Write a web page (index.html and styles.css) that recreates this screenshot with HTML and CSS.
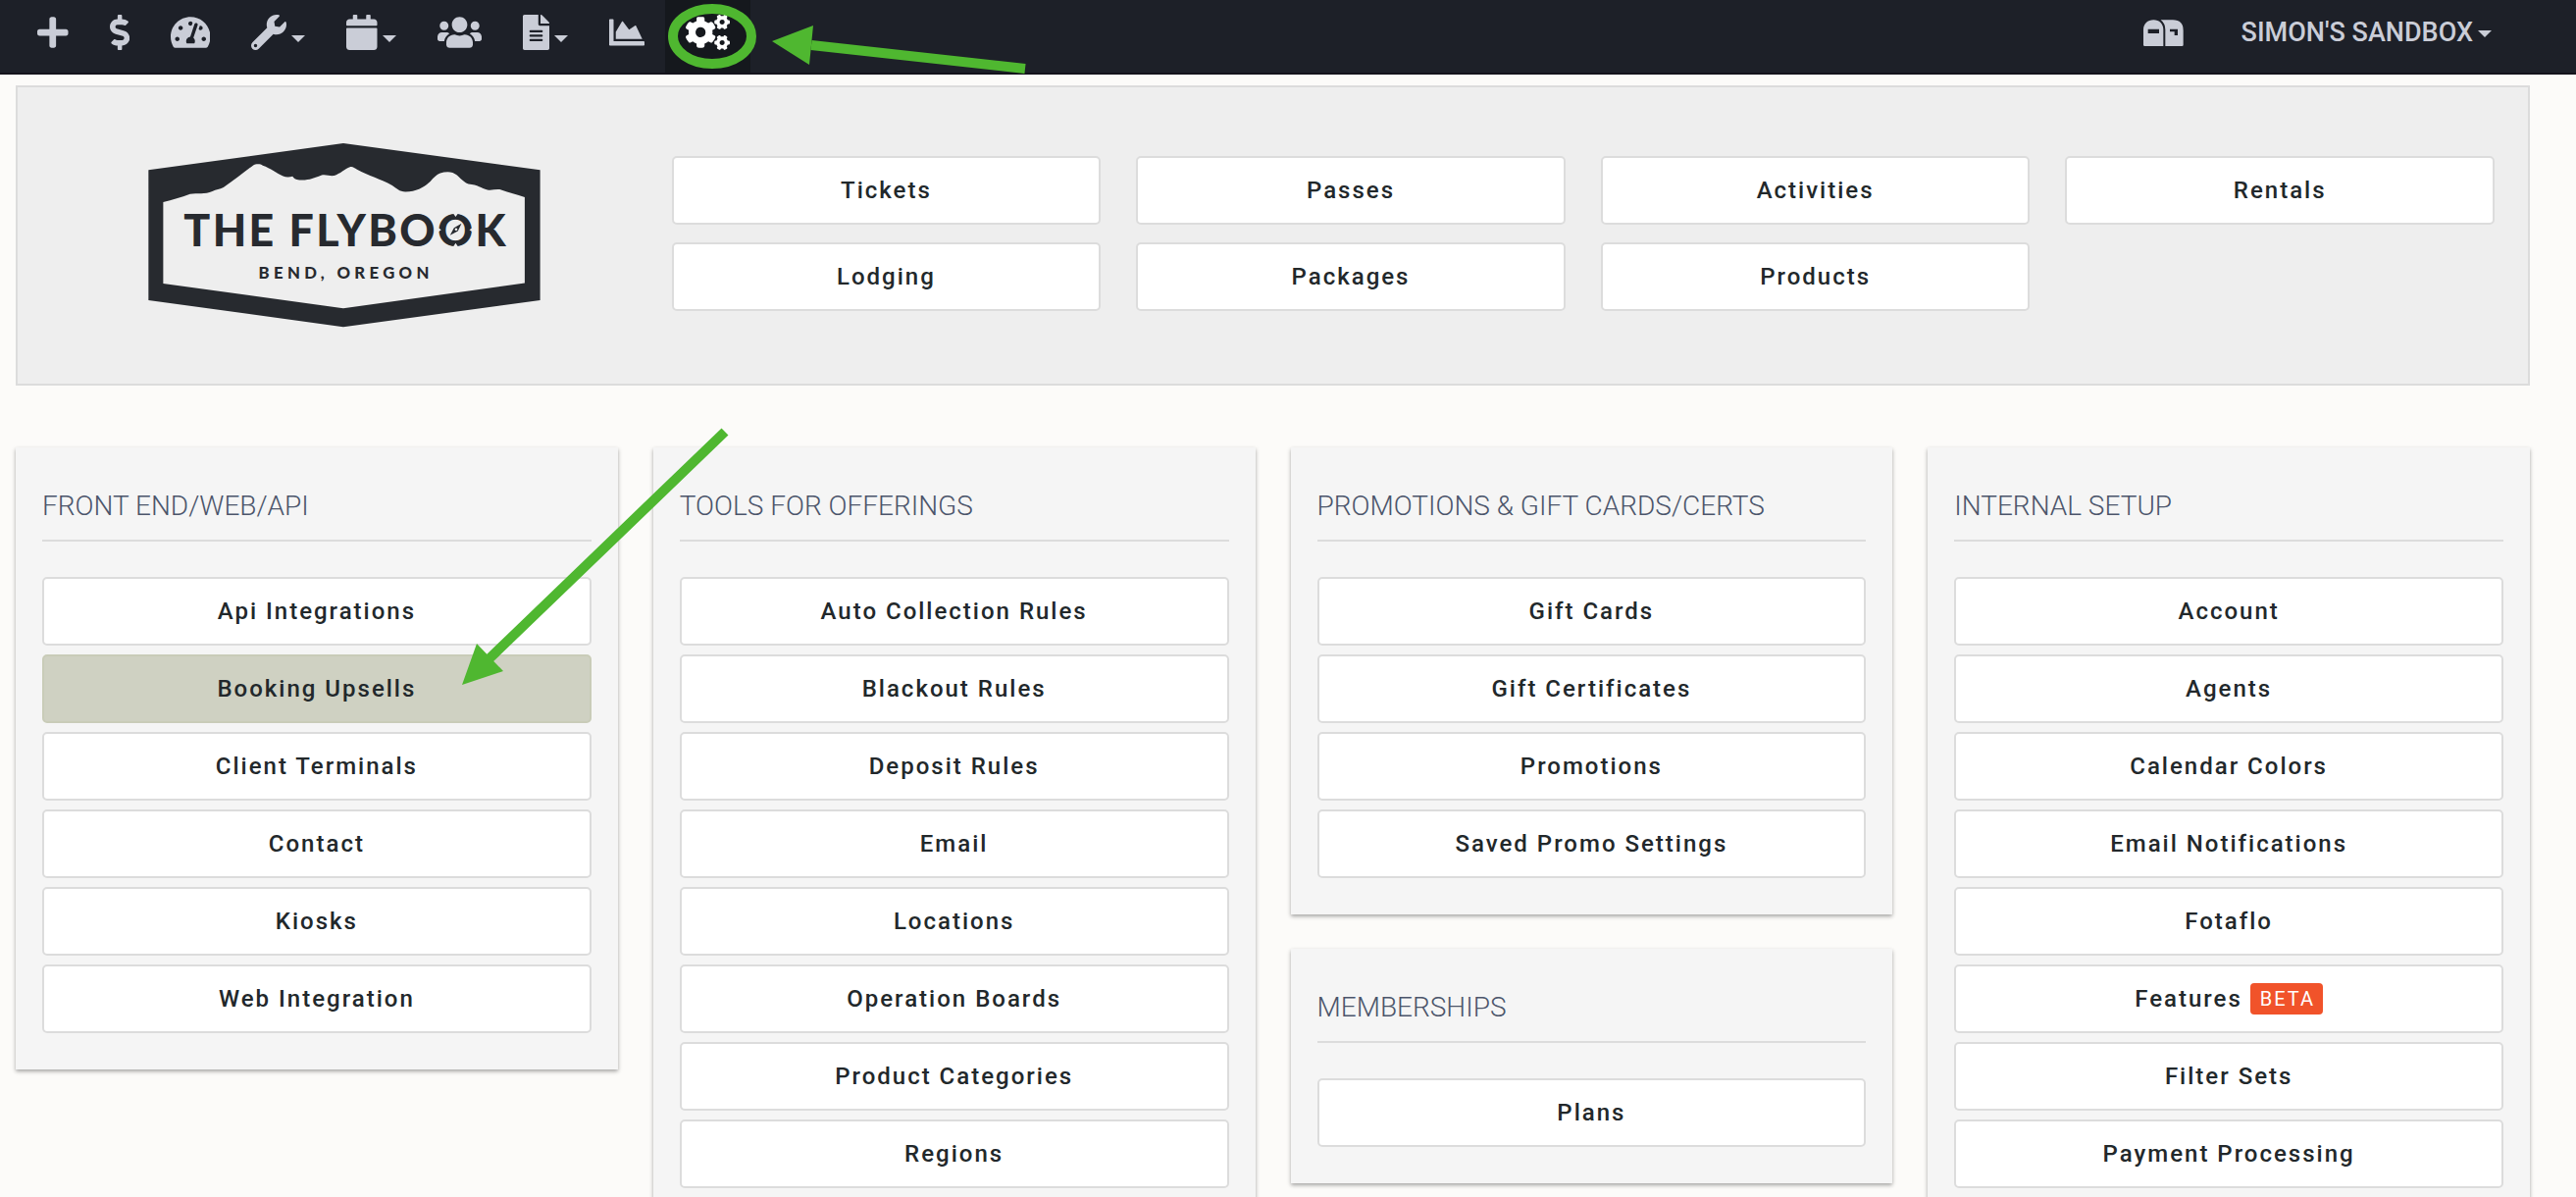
FILE: index.html
```html
<!DOCTYPE html>
<html lang="en">
<head>
    <meta charset="UTF-8">
    <meta name="viewport" content="width=device-width, initial-scale=1.0">
    <title>The Flybook - Configuration</title>
    <link rel="stylesheet" href="styles.css">
</head>
<body>
    <div class="page">
        <!-- Top navigation -->
        <nav class="navbar">
            <div class="nav-left">
                <a href="#" class="nav-item" aria-label="Add">
                    <svg class="icon" viewBox="0 0 448 512"><path d="M416 208H272V64c0-17.67-14.33-32-32-32h-32c-17.67 0-32 14.33-32 32v144H32c-17.67 0-32 14.33-32 32v32c0 17.67 14.33 32 32 32h144v144c0 17.67 14.33 32 32 32h32c17.67 0 32-14.33 32-32V304h144c17.67 0 32-14.33 32-32v-32c0-17.67-14.33-32-32-32z"/></svg>
                </a>
                <a href="#" class="nav-item" aria-label="Sales">
                    <svg class="icon" viewBox="0 0 288 512"><path d="M209.2 233.4l-108-31.6C88.7 198.2 80 186.5 80 173.5c0-16.3 13.2-29.5 29.5-29.5h66.3c12.2 0 24.2 3.7 34.2 10.5 6.1 4.1 14.3 3.1 19.5-2l34.8-34c7.1-6.9 6.1-18.4-1.8-24.5C238 74.8 207.4 64.1 176 64V16c0-8.8-7.2-16-16-16h-32c-8.8 0-16 7.2-16 16v48h-2.5C45.8 64-5.4 118.7.5 183.6c4.2 46.1 39.4 83.6 83.8 96.6l102.5 30c12.5 3.7 21.2 15.3 21.2 28.3 0 16.3-13.2 29.5-29.5 29.5h-66.3C100 368 88 364.3 78 357.5c-6.1-4.1-14.3-3.1-19.5 2l-34.8 34c-7.1 6.9-6.1 18.4 1.8 24.5 24.5 19.2 55.1 29.9 86.5 30v48c0 8.8 7.2 16 16 16h32c8.8 0 16-7.2 16-16v-48.2c46.6-.9 90.3-28.6 105.7-72.7 21.5-61.6-14.6-124.8-72.5-141.7z"/></svg>
                </a>
                <a href="#" class="nav-item" aria-label="Dashboard">
                    <svg class="icon" viewBox="0 0 576 512"><path d="M288 32C128.94 32 0 160.94 0 320c0 52.8 14.25 102.26 39.06 144.8 5.61 9.62 16.3 15.2 27.44 15.2h443c11.14 0 21.83-5.58 27.44-15.2C561.75 422.26 576 372.8 576 320c0-159.06-128.94-288-288-288zm0 64c14.71 0 26.58 10.13 30.32 23.65-1.11 2.26-2.64 4.23-3.45 6.67l-9.22 27.67c-5.13 3.49-10.97 6.01-17.64 6.01-17.67 0-32-14.33-32-32S270.33 96 288 96zM96 384c-17.67 0-32-14.33-32-32s14.33-32 32-32 32 14.33 32 32-14.33 32-32 32zm48-160c-17.67 0-32-14.33-32-32s14.33-32 32-32 32 14.33 32 32-14.33 32-32 32zm246.77-72.41l-61.33 184C343.13 347.33 352 364.54 352 384c0 11.72-3.38 22.55-8.88 32H232.88c-5.5-9.45-8.88-20.28-8.88-32 0-33.94 26.5-61.43 59.9-63.59l61.34-184.01c4.17-12.56 17.73-19.45 30.36-15.17 12.57 4.19 19.35 17.79 15.17 30.36zm14.66 57.2l15.52-46.55c3.47-1.29 7.13-2.23 11.05-2.23 17.67 0 32 14.33 32 32s-14.33 32-32 32c-11.38-.01-20.89-6.28-26.57-15.22zM480 384c-17.67 0-32-14.33-32-32s14.33-32 32-32 32 14.33 32 32-14.33 32-32 32z"/></svg>
                </a>
                <a href="#" class="nav-item" aria-label="Tools">
                    <svg class="icon" viewBox="0 0 512 512"><path d="M507.73 109.1c-2.24-9.03-13.54-12.09-20.12-5.51l-74.36 74.36-67.88-11.31-11.31-67.88 74.36-74.36c6.62-6.62 3.43-17.9-5.66-20.16-47.38-11.74-99.55.91-136.58 37.93-39.64 39.64-50.55 97.1-34.05 147.2L18.74 402.76c-24.99 24.99-24.99 65.51 0 90.5 24.99 24.99 65.51 24.99 90.5 0l213.21-213.21c50.12 16.71 107.47 5.68 147.37-34.22 37.07-37.07 49.7-89.32 37.91-136.73zM64 472c-13.25 0-24-10.75-24-24 0-13.26 10.75-24 24-24s24 10.74 24 24c0 13.25-10.75 24-24 24z"/></svg>
                    <span class="caret"></span>
                </a>
                <a href="#" class="nav-item" aria-label="Calendar">
                    <svg class="icon" viewBox="0 0 448 512"><path d="M12 192h424c6.6 0 12 5.4 12 12v260c0 26.5-21.5 48-48 48H48c-26.5 0-48-21.5-48-48V204c0-6.6 5.4-12 12-12zm436-44v-36c0-26.5-21.5-48-48-48h-48V12c0-6.6-5.4-12-12-12h-40c-6.6 0-12 5.4-12 12v52H160V12c0-6.6-5.4-12-12-12h-40c-6.6 0-12 5.4-12 12v52H48C21.5 64 0 85.5 0 112v36c0 6.6 5.4 12 12 12h424c6.6 0 12-5.4 12-12z"/></svg>
                    <span class="caret"></span>
                </a>
                <a href="#" class="nav-item" aria-label="Customers">
                    <svg class="icon" viewBox="0 0 640 512"><path d="M96 224c35.3 0 64-28.7 64-64s-28.7-64-64-64-64 28.7-64 64 28.7 64 64 64zm448 0c35.3 0 64-28.7 64-64s-28.7-64-64-64-64 28.7-64 64 28.7 64 64 64zm32 32h-64c-17.6 0-33.5 7.1-45.1 18.6 40.3 22.1 68.9 62 75.1 109.4h66c17.7 0 32-14.3 32-32v-32c0-35.3-28.7-64-64-64zm-256 0c61.9 0 112-50.1 112-112S381.9 32 320 32 208 82.1 208 144s50.1 112 112 112zm76.8 32h-8.3c-20.8 10-43.9 16-68.5 16s-47.6-6-68.5-16h-8.3C179.6 288 128 339.6 128 403.2V432c0 26.5 21.5 48 48 48h288c26.5 0 48-21.5 48-48v-28.8c0-63.6-51.6-115.2-115.2-115.2zm-223.7-13.4C161.5 263.1 145.6 256 128 256H64c-35.3 0-64 28.7-64 64v32c0 17.7 14.3 32 32 32h65.9c6.3-47.4 34.9-87.3 75.2-109.4z"/></svg>
                </a>
                <a href="#" class="nav-item" aria-label="Documents">
                    <svg class="icon" viewBox="0 0 384 512"><path d="M224 136V0H24C10.7 0 0 10.7 0 24v464c0 13.3 10.7 24 24 24h336c13.3 0 24-10.7 24-24V160H248c-13.2 0-24-10.8-24-24zm64 236c0 6.6-5.4 12-12 12H108c-6.6 0-12-5.4-12-12v-8c0-6.6 5.4-12 12-12h168c6.6 0 12 5.4 12 12v8zm0-64c0 6.6-5.4 12-12 12H108c-6.6 0-12-5.4-12-12v-8c0-6.6 5.4-12 12-12h168c6.6 0 12 5.4 12 12v8zm0-72v8c0 6.6-5.4 12-12 12H108c-6.6 0-12-5.4-12-12v-8c0-6.6 5.4-12 12-12h168c6.6 0 12 5.4 12 12zm96-114.1v6.1H256V0h6.1c6.4 0 12.5 2.5 17 7l97.9 98c4.5 4.5 7 10.6 7 16.9z"/></svg>
                    <span class="caret"></span>
                </a>
                <a href="#" class="nav-item" aria-label="Reports">
                    <svg class="icon" viewBox="0 0 512 512"><path d="M500 384c6.6 0 12 5.4 12 12v40c0 6.6-5.4 12-12 12H12c-6.6 0-12-5.4-12-12V76c0-6.6 5.4-12 12-12h40c6.6 0 12 5.4 12 12v308h436zM372.7 159.5L288 216l-85.3-113.7c-5.1-6.8-15.5-6.3-19.9 1L96 248v104h384l-89.9-187.8c-3.2-6.5-11.4-8.7-17.4-4.7z"/></svg>
                </a>
                <a href="#" class="nav-item active" aria-label="Configuration">
                    <svg class="icon" viewBox="0 0 640 512"><path d="M512.1 191l-8.2 14.3c-3 5.3-9.4 7.5-15.1 5.4-11.8-4.4-22.6-10.7-32.1-18.6-4.6-3.8-5.8-10.5-2.8-15.7l8.2-14.3c-6.9-8-12.3-17.3-15.9-27.4h-16.5c-6 0-11.2-4.3-12.2-10.3-2-12-2.1-24.6 0-37.1 1-6 6.2-10.4 12.2-10.4h16.5c3.6-10.1 9-19.4 15.9-27.4l-8.2-14.3c-3-5.2-1.9-11.9 2.8-15.7 9.5-7.9 20.4-14.2 32.1-18.6 5.7-2.1 12.1.1 15.1 5.4l8.2 14.3c10.5-1.9 21.2-1.9 31.7 0L552 6.3c3-5.3 9.4-7.5 15.1-5.4 11.8 4.4 22.6 10.7 32.1 18.6 4.6 3.8 5.8 10.5 2.8 15.7l-8.2 14.3c6.9 8 12.3 17.3 15.9 27.4h16.5c6 0 11.2 4.3 12.2 10.3 2 12 2.1 24.6 0 37.1-1 6-6.2 10.4-12.2 10.4h-16.5c-3.6 10.1-9 19.4-15.9 27.4l8.2 14.3c3 5.2 1.9 11.9-2.8 15.7-9.5 7.9-20.4 14.2-32.1 18.6-5.7 2.1-12.1-.1-15.1-5.4l-8.2-14.3c-10.4 1.9-21.2 1.9-31.7 0zm-10.5-58.8c38.5 29.6 82.4-14.3 52.8-52.8-38.5-29.7-82.4 14.3-52.8 52.8zM386.3 286.1l33.7 16.8c10.1 5.8 14.5 18.1 10.5 29.1-8.9 24.2-26.4 46.4-42.6 65.8-7.4 8.9-20.2 11.1-30.3 5.3l-29.1-16.8c-16 13.7-34.6 24.6-54.9 31.7v33.6c0 11.6-8.3 21.6-19.7 23.6-24.6 4.2-50.4 4.4-75.9 0-11.5-2-20-11.9-20-23.6V418c-20.3-7.2-38.9-18-54.9-31.7L74 403c-10 5.8-22.9 3.6-30.3-5.3-16.2-19.4-33.3-41.6-42.2-65.7-4-10.9.4-23.2 10.5-29.1l33.3-16.8c-3.9-20.9-3.9-42.4 0-63.4L12 205.8c-10.1-5.8-14.6-18.1-10.5-29 8.9-24.2 26-46.4 42.2-65.8 7.4-8.9 20.2-11.1 30.3-5.3l29.1 16.8c16-13.7 34.6-24.6 54.9-31.7V57.1c0-11.5 8.2-21.5 19.6-23.5 24.6-4.2 50.5-4.4 76-.1 11.5 2 20 11.9 20 23.6v33.6c20.3 7.2 38.9 18 54.9 31.7l29.1-16.8c10-5.8 22.9-3.6 30.3 5.3 16.2 19.4 33.2 41.6 42.1 65.8 4 10.9.1 23.2-10 29.1l-33.7 16.8c3.9 21 3.9 42.5 0 63.5zm-117.6 21.1c59.2-77-28.7-164.9-105.7-105.7-59.2 77 28.7 164.9 105.7 105.7zm243.4 182.7l-8.2 14.3c-3 5.3-9.4 7.5-15.1 5.4-11.8-4.4-22.6-10.7-32.1-18.6-4.6-3.8-5.8-10.5-2.8-15.7l8.2-14.3c-6.9-8-12.3-17.3-15.9-27.4h-16.5c-6 0-11.2-4.3-12.2-10.3-2-12-2.1-24.6 0-37.1 1-6 6.2-10.4 12.2-10.4h16.5c3.6-10.1 9-19.4 15.9-27.4l-8.2-14.3c-3-5.2-1.9-11.9 2.8-15.7 9.5-7.9 20.4-14.2 32.1-18.6 5.7-2.1 12.1.1 15.1 5.4l8.2 14.3c10.5-1.9 21.2-1.9 31.7 0l8.2-14.3c3-5.3 9.4-7.5 15.1-5.4 11.8 4.4 22.6 10.7 32.1 18.6 4.6 3.8 5.8 10.5 2.8 15.7l-8.2 14.3c6.9 8 12.3 17.3 15.9 27.4h16.5c6 0 11.2 4.3 12.2 10.3 2 12 2.1 24.6 0 37.1-1 6-6.2 10.4-12.2 10.4h-16.5c-3.6 10.1-9 19.4-15.9 27.4l8.2 14.3c3 5.2 1.9 11.9-2.8 15.7-9.5 7.9-20.4 14.2-32.1 18.6-5.7 2.1-12.1-.1-15.1-5.4l-8.2-14.3c-10.4 1.9-21.2 1.9-31.7 0zM501.6 431c38.5 29.6 82.4-14.3 52.8-52.8-38.5-29.6-82.4 14.3-52.8 52.8z"/></svg>
                </a>
            </div>
            <div class="nav-right">
                <a href="#" class="nav-item" aria-label="Mailbox">
                    <svg class="icon icon-mail" viewBox="0 0 122 81"><path fill-rule="evenodd" d="M0 77V31C0 13 13 1 31 1s30 12 30 30v50H4q-4 0-4-4zM14 29v13h34V29zM53 1h37q32 0 32 32v44q0 4-4 4H67V31Q67 12 53 1zM81 29v8h14v11h10V29z"/></svg>
                </a>
                <a href="#" class="nav-item user">SIMON'S SANDBOX<span class="caret"></span></a>
            </div>
        </nav>

        <main class="content">
            <!-- Logo and offerings -->
            <section class="offerings">
                <div class="logo-wrap">
                    <svg class="logo" viewBox="62 48 1198 562">
                        <path class="logo-dark" fill-rule="evenodd" d="M63 130L658 48l601 82v397L658 609 63 527zM108 228v248l550 76 554-77V213C1187 204 1164 198 1140 190C1126 186 1112 193 1098 190C1078 185 1070 174 1040 172C1020 166 1012 146 992 138C980 134 966 136 954 139C940 144 930 158 920 168C902 184 880 196 848 196C828 196 822 186 806 176C774 158 734 146 700 128C692 124 686 118 678 121C664 126 648 142 630 147C616 149 604 142 590 146C568 154 552 162 524 160C512 160 506 154 503 149C494 152 482 152 474 148C454 140 436 124 412 116C404 110 390 111 382 116C354 136 326 160 292 183C280 190 270 188 258 195C236 205 212 200 190 203C162 214 136 220 108 228z"/>
                        <text class="logo-name" x="666" y="364" text-anchor="middle">THE FLYBOOK</text>
                        <path class="logo-notch" d="M992 260h18l-9 13zM992 366h18l-9-13zM944 303v18l13-9zM1056 303v18l-13-9z"/>
                        <path class="logo-dark" fill-rule="evenodd" d="M1019 293l-11 23-24 13 12-23zM1002 307a4 4 0 1 0 1 0z"/>
                        <text class="logo-place" x="666" y="462" text-anchor="middle">BEND, OREGON</text>
                    </svg>
                </div>
                <div class="offer-grid">
                    <a href="#" class="btn">Tickets</a>
                    <a href="#" class="btn">Passes</a>
                    <a href="#" class="btn">Activities</a>
                    <a href="#" class="btn">Rentals</a>
                    <a href="#" class="btn">Lodging</a>
                    <a href="#" class="btn">Packages</a>
                    <a href="#" class="btn">Products</a>
                </div>
            </section>

            <!-- Setup columns -->
            <div class="columns">
                <div class="column">
                    <section class="card">
                        <h2>FRONT END/WEB/API</h2>
                        <a href="#" class="btn">Api Integrations</a>
                        <a href="#" class="btn selected">Booking Upsells</a>
                        <a href="#" class="btn">Client Terminals</a>
                        <a href="#" class="btn">Contact</a>
                        <a href="#" class="btn">Kiosks</a>
                        <a href="#" class="btn">Web Integration</a>
                    </section>
                </div>
                <div class="column">
                    <section class="card">
                        <h2>TOOLS FOR OFFERINGS</h2>
                        <a href="#" class="btn">Auto Collection Rules</a>
                        <a href="#" class="btn">Blackout Rules</a>
                        <a href="#" class="btn">Deposit Rules</a>
                        <a href="#" class="btn">Email</a>
                        <a href="#" class="btn">Locations</a>
                        <a href="#" class="btn">Operation Boards</a>
                        <a href="#" class="btn">Product Categories</a>
                        <a href="#" class="btn">Regions</a>
                    </section>
                </div>
                <div class="column">
                    <section class="card">
                        <h2>PROMOTIONS &amp; GIFT CARDS/CERTS</h2>
                        <a href="#" class="btn">Gift Cards</a>
                        <a href="#" class="btn">Gift Certificates</a>
                        <a href="#" class="btn">Promotions</a>
                        <a href="#" class="btn">Saved Promo Settings</a>
                    </section>
                    <section class="card">
                        <h2>MEMBERSHIPS</h2>
                        <a href="#" class="btn">Plans</a>
                    </section>
                </div>
                <div class="column">
                    <section class="card">
                        <h2>INTERNAL SETUP</h2>
                        <a href="#" class="btn">Account</a>
                        <a href="#" class="btn">Agents</a>
                        <a href="#" class="btn">Calendar Colors</a>
                        <a href="#" class="btn">Email Notifications</a>
                        <a href="#" class="btn">Fotaflo</a>
                        <a href="#" class="btn">Features <span class="badge">BETA</span></a>
                        <a href="#" class="btn">Filter Sets</a>
                        <a href="#" class="btn">Payment Processing</a>
                    </section>
                </div>
            </div>
        </main>

        <!-- Pointers drawn over the page -->
        <svg class="pointers" width="1060" height="720" viewBox="0 0 1060 720" aria-hidden="true">
            <ellipse cx="726" cy="37" rx="40" ry="28"/>
            <path class="shaft" d="M827 46L1045 70M498 672L739 440"/>
            <path class="head" d="M787 42L829 26L825 66zM471 698L486 656L513 684z"/>
        </svg>
    </div>
</body>
</html>
```
FILE: styles.css
```css
* {
    margin: 0;
    padding: 0;
    box-sizing: border-box;
}

body {
    font-family: Roboto, "Liberation Sans", sans-serif;
    background: #fcfbf9;
    color: #22282b;
}

a {
    color: inherit;
    text-decoration: none;
}

.page {
    position: relative;
    height: 100vh;
    overflow: hidden;
}

/* Navbar */
.navbar {
    display: flex;
    justify-content: space-between;
    padding: 0 19px 0 17px;
    background: #1d2028;
    border-bottom: 2px solid #14131c;
    color: #cacdd7;
}

.nav-left,
.nav-right {
    display: flex;
}

.nav-item {
    display: flex;
    align-items: center;
    height: 74px;
    padding: 0 21px 8px;
}

.nav-item.active {
    background: #15181d;
    color: #fff;
}

.icon {
    display: block;
    height: 36px;
    fill: currentColor;
}

.icon-mail {
    height: 27px;
}

.caret {
    margin: 13px 0 0 5px;
    border-top: 7px solid currentColor;
    border-left: 7px solid transparent;
    border-right: 7px solid transparent;
}

.user {
    padding-left: 38px;
    padding-right: 67px;
    font-size: 27px;
    font-weight: 500;
}

.user .caret {
    margin-top: 3px;
}

/* Main content */
.content {
    padding: 11px 47px 0 16px;
}

.offerings {
    display: grid;
    grid-template-columns: 26.4% 1fr;
    align-items: center;
    padding: 57px 34px 57px 0;
    background: #eee;
    border: 2px solid #dcdcdc;
}

.logo-wrap {
    display: flex;
    justify-content: center;
}

.logo {
    display: block;
    width: 60%;
}

.logo-dark {
    fill: #272a2f;
}

.logo-notch {
    fill: #eee;
}

.logo-name,
.logo-place {
    font-family: Lato, sans-serif;
    font-weight: 900;
    fill: #272a2f;
}

.logo-name {
    font-size: 134px;
    letter-spacing: 7px;
}

.logo-place {
    font-size: 50px;
    letter-spacing: 13px;
}

.offer-grid {
    display: grid;
    grid-template-columns: repeat(4, 1fr);
    gap: 18px 36px;
    margin-bottom: 4px;
}

.btn {
    display: flex;
    align-items: center;
    justify-content: center;
    height: 70px;
    background: #fff;
    border: 2px solid #dcdcdc;
    border-radius: 5px;
    font-size: 24px;
    font-weight: 500;
    letter-spacing: 2px;
}

.btn.selected {
    background: #cfd1c2;
    border-color: #c9ccb8;
}

.columns {
    display: grid;
    grid-template-columns: repeat(4, 1fr);
    gap: 36px;
    margin-top: 63px;
}

.column {
    display: flex;
    flex-direction: column;
    gap: 35px;
}

.card {
    display: flex;
    flex-direction: column;
    gap: 9px;
    padding: 40px 27px 37px;
    background: #f5f5f5;
    box-shadow: 0 2px 4px rgba(0, 0, 0, 0.35);
}

.card h2 {
    margin-bottom: 27px;
    padding-bottom: 14px;
    border-bottom: 2px solid #dcdcdc;
    color: #4c556b;
    font-size: 28px;
    font-weight: 300;
    line-height: 40px;
}

.badge {
    margin-left: 8px;
    padding: 0 8px 0 10px;
    background: #f1532a;
    border-radius: 4px;
    color: #fff;
    font-size: 20px;
    font-weight: 400;
    line-height: 32px;
}

/* Pointers */
.pointers {
    position: absolute;
    top: 0;
    left: 0;
    pointer-events: none;
}

.pointers ellipse,
.shaft {
    fill: none;
    stroke: #4fb730;
    stroke-width: 10;
}

.head {
    fill: #4fb730;
}
```
